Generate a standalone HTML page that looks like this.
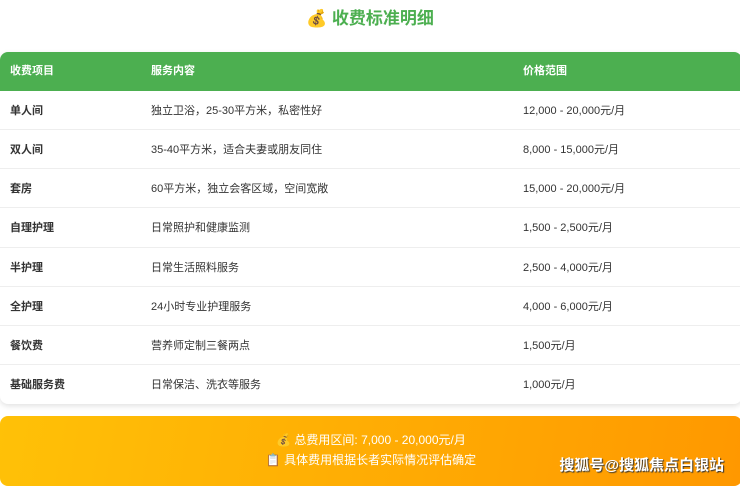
<!DOCTYPE html>
<html><head><meta charset="utf-8"><style>
body{margin:0;width:740px;height:482px;overflow:hidden;background:#fff;font-family:"Liberation Sans","Noto Sans CJK SC",sans-serif;}
.title{position:absolute;top:7px;left:0;width:740px;text-align:center;font-size:17px;font-weight:bold;color:#4caf50;line-height:24px;}
.tbl{position:absolute;left:0;top:52px;width:742px;border-radius:8px;overflow:hidden;box-shadow:0 2px 6px rgba(0,0,0,.12);background:#fff;}
.row{height:39.15px;position:relative;border-bottom:1px solid #eee;box-sizing:border-box;font-size:11px;color:#333;}
.row span{position:absolute;top:0;line-height:40px;}
.c1{left:10px;font-weight:bold;}.c2{left:151px;}.c3{left:523px;}
.hd{background:#4caf50;color:#fff;font-weight:bold;height:39px;border:none;}
.hd span{line-height:39px;}
.foot{position:absolute;left:0;top:416px;width:742px;height:70px;border-radius:8px;background:linear-gradient(100deg,#ffc107,#ff9800);color:#fff;font-size:12px;text-align:center;}
.foot div{line-height:20px;}
.wm{position:absolute;right:16px;top:454px;font-size:15px;font-weight:bold;color:#fff;text-shadow:1px 1px 1px #333;}
</style></head><body>
<div class="title">💰 收费标准明细</div>
<div class="tbl">
<div class="row hd"><span class="c1">收费项目</span><span class="c2">服务内容</span><span class="c3">价格范围</span></div>
<div class="row"><span class="c1">单人间</span><span class="c2">独立卫浴，25-30平方米，私密性好</span><span class="c3">12,000 - 20,000元/月</span></div>
<div class="row"><span class="c1">双人间</span><span class="c2">35-40平方米，适合夫妻或朋友同住</span><span class="c3">8,000 - 15,000元/月</span></div>
<div class="row"><span class="c1">套房</span><span class="c2">60平方米，独立会客区域，空间宽敞</span><span class="c3">15,000 - 20,000元/月</span></div>
<div class="row"><span class="c1">自理护理</span><span class="c2">日常照护和健康监测</span><span class="c3">1,500 - 2,500元/月</span></div>
<div class="row"><span class="c1">半护理</span><span class="c2">日常生活照料服务</span><span class="c3">2,500 - 4,000元/月</span></div>
<div class="row"><span class="c1">全护理</span><span class="c2">24小时专业护理服务</span><span class="c3">4,000 - 6,000元/月</span></div>
<div class="row"><span class="c1">餐饮费</span><span class="c2">营养师定制三餐两点</span><span class="c3">1,500元/月</span></div>
<div class="row" style="border:none"><span class="c1">基础服务费</span><span class="c2">日常保洁、洗衣等服务</span><span class="c3">1,000元/月</span></div>
</div>
<div class="foot"><div style="padding-top:14px">💰 总费用区间: 7,000 - 20,000元/月</div><div>📋 具体费用根据长者实际情况评估确定</div></div>
<div class="wm">搜狐号@搜狐焦点白银站</div>
</body></html>
